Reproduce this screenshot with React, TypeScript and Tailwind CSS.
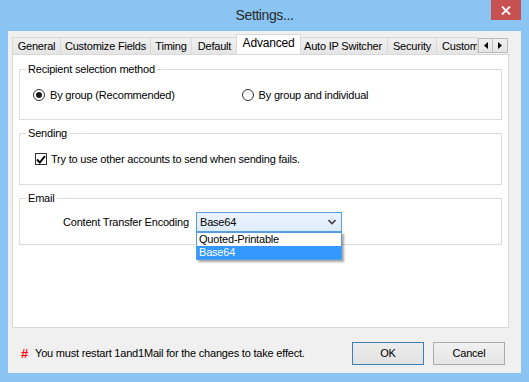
import React from "react";

const font = { fontFamily: '"Liberation Sans", Arial, sans-serif' };

function Tab({ label, w, selected }: { label: string; w: number; selected?: boolean }) {
  if (selected) {
    return (
      <div
        className="relative z-10 -mx-[2px] flex h-[20px] items-center justify-center border border-b-0 border-[#d9d9d9] bg-white text-[12px] tracking-[-0.2px] text-black"
        style={{ width: w + 4 }}
      >
        <span className="-mt-[3px]">{label}</span>
      </div>
    );
  }
  return (
    <div
      className="flex h-[17px] items-center justify-center overflow-hidden border border-b-0 border-l-0 border-[#d9d9d9] bg-gradient-to-b from-[#f0f0f0] to-[#e5e5e5] text-[11px] tracking-[-0.2px] text-black first:border-l"
      style={{ width: w }}
    >
      <span className="whitespace-nowrap">{label}</span>
    </div>
  );
}

function GroupBox({ title, h, children }: { title: string; h: number; children?: React.ReactNode }) {
  return (
    <div className="relative border border-[#dcdcdc]" style={{ height: h }}>
      <span className="absolute -top-[8px] left-[6px] bg-white px-[2px] text-[11px] leading-[14px] tracking-[-0.2px] text-black">
        {title}
      </span>
      {children}
    </div>
  );
}

export default function App() {
  return (
    <div className="h-[382px] w-[529px] overflow-hidden bg-[#8ac4f3] text-black" style={font}>
      {/* title bar */}
      <div className="relative flex h-[31px] items-center justify-center">
        <span className="text-[14px] tracking-[-0.4px] text-[#2b2b2b]">Settings...</span>
        <div className="absolute right-[8px] top-0 flex h-[20px] w-[30px] items-center justify-center bg-[#c75050]">
          <svg width="10" height="9" viewBox="0 0 10 9">
            <path d="M1 0.5 L9 8.5 M9 0.5 L1 8.5" stroke="white" strokeWidth="1.8" />
          </svg>
        </div>
      </div>
      {/* client */}
      <div className="mx-[8px] flex h-[342px] flex-col bg-[#f0f0f0] px-[4px] pt-[3px]">
        {/* tab strip */}
        <div className="flex h-[20px] items-end overflow-visible">
          <Tab label="General" w={49} />
          <Tab label="Customize Fields" w={90} />
          <Tab label="Timing" w={41} />
          <Tab label="Default" w={46} />
          <Tab label="Advanced" w={61} selected />
          <Tab label="Auto IP Switcher" w={89} />
          <Tab label="Security" w={49} />
          <div className="flex h-[17px] w-[41px] items-center overflow-hidden border border-b-0 border-l-0 border-[#d9d9d9] bg-gradient-to-b from-[#f0f0f0] to-[#e5e5e5] pl-[5px] text-[11px] tracking-[-0.2px]">
            <span className="whitespace-nowrap">Custom Fields</span>
          </div>
          <div className="mb-[1px] flex self-end">
            <div className="flex h-[15px] w-[15px] items-center justify-center border border-[#bcbcbc] bg-gradient-to-b from-[#f0f0f0] to-[#e5e5e5]">
              <svg width="4" height="7" viewBox="0 0 4 7"><path d="M4 0 L0 3.5 L4 7 Z" fill="black" /></svg>
            </div>
            <div className="flex h-[15px] w-[15px] items-center justify-center border border-l-0 border-[#bcbcbc] bg-gradient-to-b from-[#f0f0f0] to-[#e5e5e5]">
              <svg width="4" height="7" viewBox="0 0 4 7"><path d="M0 0 L4 3.5 L0 7 Z" fill="black" /></svg>
            </div>
          </div>
        </div>
        {/* panel */}
        <div className="flex h-[274px] w-[497px] flex-col gap-[13px] border border-[#d9d9d9] bg-white px-[6px] pt-[14px]">
          <GroupBox title="Recipient selection method" h={51}>
            <div className="flex items-center pt-[17px] text-[11px] tracking-[-0.2px]">
              <div className="ml-[13px] flex items-center gap-[5px]">
                <div className="flex h-[12px] w-[12px] items-center justify-center rounded-full border border-[#333]">
                  <div className="h-[6px] w-[6px] rounded-full bg-[#1a1a1a]" />
                </div>
                <span>By group (Recommended)</span>
              </div>
              <div className="ml-[67px] flex items-center gap-[5px]">
                <div className="h-[12px] w-[12px] rounded-full border border-[#333] bg-white" />
                <span>By group and individual</span>
              </div>
            </div>
          </GroupBox>
          <GroupBox title="Sending" h={52}>
            <div className="flex items-center gap-[4px] pl-[15px] pt-[17px] text-[11px] tracking-[-0.2px]">
              <div className="flex h-[12px] w-[12px] items-center justify-center border border-[#333] bg-white">
                <svg width="10" height="9" viewBox="0 0 10 9">
                  <path d="M1 4.5 L3.8 7.5 L9 1" stroke="black" strokeWidth="2" fill="none" />
                </svg>
              </div>
              <span>Try to use other accounts to send when sending fails.</span>
            </div>
          </GroupBox>
          <GroupBox title="Email" h={47}>
            <div className="relative flex items-center pl-[43px] pt-[13px] text-[11px] tracking-[-0.2px]">
              <span className="w-[133px]">Content Transfer Encoding</span>
              <div className="relative flex h-[20px] w-[146px] items-center justify-between border border-[#569de5] bg-gradient-to-b from-[#ecf4fc] to-[#dcecfc] pl-[3px] pr-[5px]">
                <span>Base64</span>
                <svg width="8" height="6" viewBox="0 0 8 6">
                  <path d="M0.5 1 L4 4.5 L7.5 1" stroke="#404040" strokeWidth="1.6" fill="none" />
                </svg>
                <div className="absolute left-[-1px] top-[19px] z-20 w-[146px] border border-[#569de5] bg-white shadow-[2px_2px_2px_rgba(0,0,0,0.35)]">
                  <div className="h-[13px] pl-[2px] leading-[13px]">Quoted-Printable</div>
                  <div className="h-[13px] bg-[#3399ff] pl-[2px] leading-[13px] text-white">Base64</div>
                </div>
              </div>
            </div>
          </GroupBox>
        </div>
        {/* footer */}
        <div className="flex flex-1 items-center pl-[9px] pr-[12px] pt-[6px] text-[11px] tracking-[-0.2px]">
          <span className="w-[13px] text-[13px] font-bold text-[#ff0000]">#</span>
          <span className="ml-[1px]">You must restart 1and1Mail for the changes to take effect.</span>
          <div className="ml-auto flex gap-[9px]">
            <button className="h-[23px] w-[72px] border border-[#3c7fb1] bg-gradient-to-b from-[#ececec] to-[#e2e2e2] text-[11px]">OK</button>
            <button className="h-[23px] w-[72px] border border-[#acacac] bg-gradient-to-b from-[#f0f0f0] to-[#e5e5e5] text-[11px]">Cancel</button>
          </div>
        </div>
      </div>
    </div>
  );
}
